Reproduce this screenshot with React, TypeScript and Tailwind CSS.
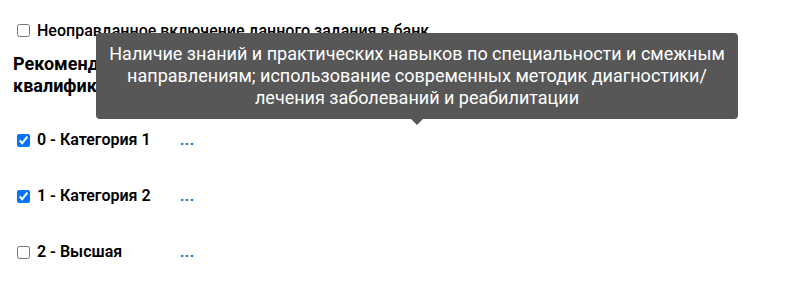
import React from "react";

const rows = [
  { label: "0 - Категория 1", checked: true },
  { label: "1 - Категория 2", checked: true },
  { label: "2 - Высшая", checked: false },
];

export default function App() {
  return (
    <div
      className="relative w-[790px] h-[283px] bg-white text-black overflow-hidden"
      style={{ fontFamily: "Roboto, 'Noto Sans', sans-serif" }}
    >
      <div className="pl-[13px] pt-[20px]">
        <label className="flex items-center gap-[3px] text-[16px] font-medium leading-[20px]">
          <input type="checkbox" className="m-[4px] w-[13px] h-[13px]" />
          <span>Неоправданное включение данного задания в банк</span>
        </label>
        <div className="mt-[12px] text-[18px] font-bold leading-[22px] w-[300px]">
          Рекомендуемая категория квалификации
        </div>
        <div className="mt-[33px] flex flex-col gap-[36px]">
          {rows.map((r) => (
            <div key={r.label} className="flex items-center h-[20px]">
              <label className="flex items-center gap-[3px] w-[167px] text-[16px] font-semibold leading-[20px]">
                <input
                  type="checkbox"
                  defaultChecked={r.checked}
                  className="m-[4px] w-[13px] h-[13px]"
                />
                <span>{r.label}</span>
              </label>
              <span className="text-[#1565c0] text-[15px] font-bold tracking-[0.5px] leading-[20px]">
                ...
              </span>
            </div>
          ))}
        </div>
      </div>
      <div className="absolute left-[96px] top-[33px] w-[642px] h-[86px] rounded-[4px] bg-[#575757] text-white text-[18px] leading-[22px] text-center flex items-center justify-center px-[10px]">
        <span>
          Наличие знаний и практических навыков по специальности и смежным
          <br />
          направлениям; использование современных методик диагностики/
          <br />
          лечения заболеваний и реабилитации
        </span>
        <div className="absolute left-[315px] top-[86px] w-0 h-0 border-l-[6px] border-r-[6px] border-t-[6px] border-l-transparent border-r-transparent border-t-[#575757]" />
      </div>
    </div>
  );
}
